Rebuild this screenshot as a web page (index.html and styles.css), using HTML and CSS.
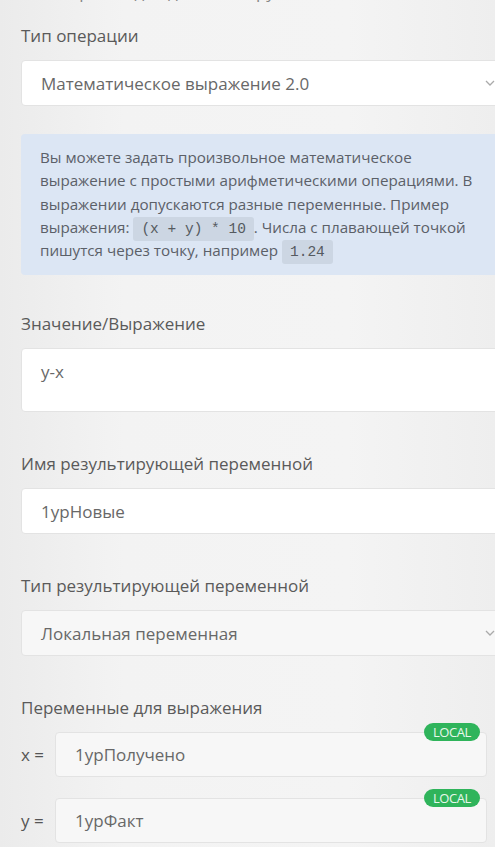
FILE: index.html
```html
<!DOCTYPE html>
<html lang="ru">
<head>
<meta charset="utf-8">
<link rel="stylesheet" href="styles.css">
</head>
<body>
<div class="page">
  <div class="clip-title">Настройки для действия группы</div>

  <div class="field first">
    <div class="label">Тип операции</div>
    <div class="control select">
      <span>Математическое выражение 2.0</span>
      <svg class="chev" width="10" height="6" viewBox="0 0 10 6"><path d="M1 1l4 4 4-4" fill="none" stroke="#aaa" stroke-width="1.3"/></svg>
    </div>
  </div>

  <div class="info">
    Вы можете задать произвольное математическое выражение с простыми арифметическими операциями. В выражении допускаются разные переменные. Пример выражения: <code>(x + y) * 10</code>. Числа с плавающей точкой пишутся через точку, например <code>1.24</code>
  </div>

  <div class="field">
    <div class="label">Значение/Выражение</div>
    <div class="control textarea">y-x</div>
  </div>

  <div class="field">
    <div class="label">Имя результирующей переменной</div>
    <div class="control">1урНовые</div>
  </div>

  <div class="field">
    <div class="label">Тип результирующей переменной</div>
    <div class="control select grey">
      <span>Локальная переменная</span>
      <svg class="chev" width="10" height="6" viewBox="0 0 10 6"><path d="M1 1l4 4 4-4" fill="none" stroke="#aaa" stroke-width="1.3"/></svg>
    </div>
  </div>

  <div class="field vars">
    <div class="label">Переменные для выражения</div>
    <div class="var-row">
      <span class="var-name">x =</span>
      <div class="control var-input">1урПолучено<span class="badge">LOCAL</span></div>
    </div>
    <div class="var-row">
      <span class="var-name">y =</span>
      <div class="control var-input">1урФакт<span class="badge">LOCAL</span></div>
    </div>
  </div>
</div>
</body>
</html>
```

FILE: styles.css
```css
html, body {
  margin: 0;
  padding: 0;
}
body {
  background: linear-gradient(90deg, #ebebeb 0%, #f3f3f3 25%, #f4f4f4 70%, #eeeeee 100%);
  font-family: "Open Sans", "Noto Sans", sans-serif;
  color: #5c5c5c;
  width: 495px;
  height: 847px;
  overflow: hidden;
}
.page {
  padding-left: 21px;
  width: 485px;
}
.clip-title {
  font-size: 17px;
  line-height: 22px;
  height: 22px;
  margin-top: -19px;
  color: #888;
  padding-left: 20px;
}
.label {
  font-size: 17px;
  line-height: 22px;
  color: #5a5a5a;
  margin-bottom: 13px;
}
.field.first {
  margin-top: 22px;
}
.control {
  position: relative;
  box-sizing: border-box;
  background: #fff;
  border: 1px solid #e3e3e3;
  border-radius: 4px;
  height: 46px;
  padding: 0 19px;
  display: flex;
  align-items: center;
  font-size: 17px;
  color: #686868;
}
.select {
  justify-content: space-between;
  padding-right: 10px;
}
.grey {
  background: #f7f7f7;
}
.info {
  margin-top: 28px;
  margin-bottom: 38px;
  background: #dce6f4;
  border-radius: 4px;
  padding: 12px 16px 13px 19px;
  font-size: 15.2px;
  line-height: 23.3px;
  color: #5b6068;
}
.info code {
  font-family: "Liberation Mono", "DejaVu Sans Mono", monospace;
  font-size: 14.5px;
  line-height: 1;
  background: #ccd6e3;
  border-radius: 3px;
  padding: 4px 8px;
  color: #555a60;
}
.textarea {
  height: 64px;
  align-items: flex-start;
  padding-top: 11px;
}
.field + .field {
  margin-top: 41px;
}
.vars .label {
  margin-bottom: 13px;
}
.var-row {
  display: flex;
  align-items: center;
  width: 466px;
  margin-bottom: 21px;
}
.var-name {
  width: 34px;
  font-size: 17px;
  color: #555;
}
.var-input {
  flex: 1;
  background: #f7f7f7;
  height: 45px;
}
.badge {
  position: absolute;
  right: 6px;
  top: -10px;
  background: #2fb45b;
  color: #e8f7ec;
  font-size: 13px;
  line-height: 18px;
  padding: 0 9px;
  border-radius: 9px;
  letter-spacing: -0.4px;
}
```
